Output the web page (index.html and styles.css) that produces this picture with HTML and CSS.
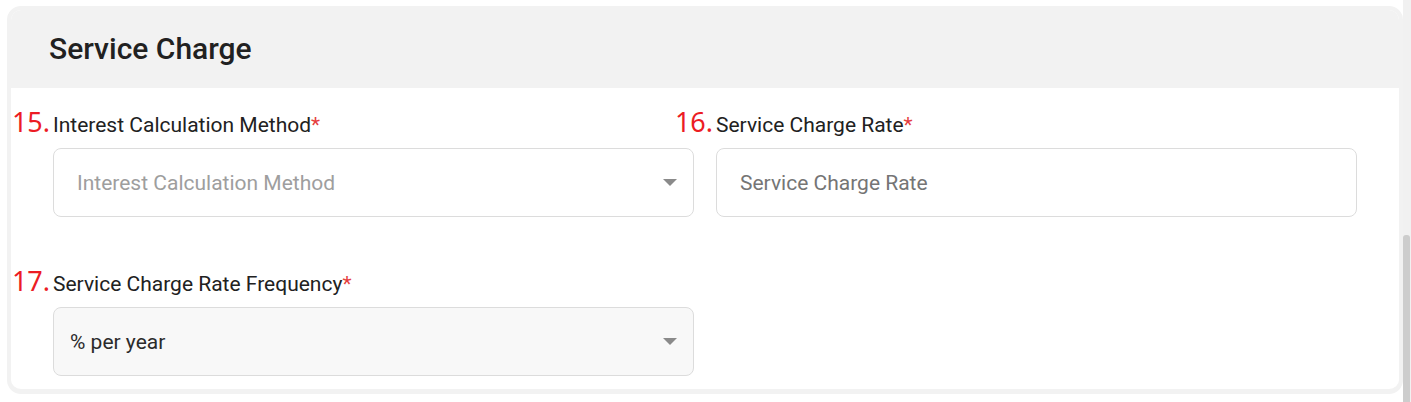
FILE: index.html
```html
<!DOCTYPE html>
<html lang="en">
<head>
  <meta charset="UTF-8">
  <meta name="viewport" content="width=device-width, initial-scale=1.0">
  <title>Service Charge</title>
  <link rel="stylesheet" href="styles.css">
</head>
<body>
  <main class="page">
    <section class="card">
      <header class="card-head">
        <h2>Service Charge</h2>
      </header>

      <div class="card-body">
        <div class="field">
          <label class="field-label"><span class="num">15.</span>Interest Calculation Method<span class="req">*</span></label>
          <div class="control select placeholder">
            <span>Interest Calculation Method</span>
            <span class="caret"></span>
          </div>
        </div>

        <div class="field">
          <label class="field-label" for="rate"><span class="num">16.</span>Service Charge Rate<span class="req">*</span></label>
          <input class="control" id="rate" type="text" placeholder="Service Charge Rate">
        </div>

        <div class="field">
          <label class="field-label"><span class="num">17.</span>Service Charge Rate Frequency<span class="req">*</span></label>
          <div class="control select filled">
            <span>% per year</span>
            <span class="caret"></span>
          </div>
        </div>
      </div>
    </section>
  </main>

  <div class="scrollbar"><div class="thumb"></div></div>
</body>
</html>
```

FILE: styles.css
```css
html, body { margin: 0; height: 100%; }
body { display: flex; overflow: hidden; background: #fff; font-family: Roboto, "Liberation Sans", sans-serif; color: #212121; }

.page { flex: 1; padding: 6px 0 0 7px; }
.card { border: 4px solid #f2f2f2; border-bottom-width: 5px; border-radius: 14px; background: #fff; overflow: hidden; }

.card-head { height: 78px; display: flex; align-items: center; padding: 0 37px 0 38px; background: #f2f2f2; }
.card-head h2 { margin: 0; font-size: 30px; font-weight: 500; line-height: 36px; color: #212121; }

.card-body { display: grid; grid-template-columns: 641px 641px; column-gap: 22px; row-gap: 51px; padding: 21px 41px 13px 42px; }

.field-label { position: relative; display: block; font-size: 21px; line-height: 32px; margin-bottom: 7px; color: #212121; }
.field-label .num { position: absolute; right: 100%; margin-right: 3px; top: -3px; font-family: "Noto Sans", "Open Sans", sans-serif; font-size: 27px; font-weight: 400; line-height: 32px; color: #ec1c24; }
.req { color: #e53e3e; }

.control { box-sizing: border-box; display: flex; align-items: center; width: 100%; height: 69px; padding: 0 23px; border: 1px solid #dcdcdc; border-radius: 8px; background: #fff; font-family: Roboto, sans-serif; font-size: 21px; color: #212121; outline: none; }
input.control::placeholder { color: #757575; }
.select { justify-content: space-between; padding-right: 16px; }
.select.placeholder { color: #9e9e9e; }
.select.filled { background: #f8f8f8; padding-left: 16px; color: #2b2b2b; }
.caret { width: 0; height: 0; border-left: 7px solid transparent; border-right: 7px solid transparent; border-top: 7px solid #8a8a8a; }

.scrollbar { width: 8px; height: 100%; background: #f1f1f1; }
.scrollbar .thumb { width: 7px; height: 167px; margin-top: 235px; border-radius: 3px 3px 0 0; background: #cdcdcd; }
```
